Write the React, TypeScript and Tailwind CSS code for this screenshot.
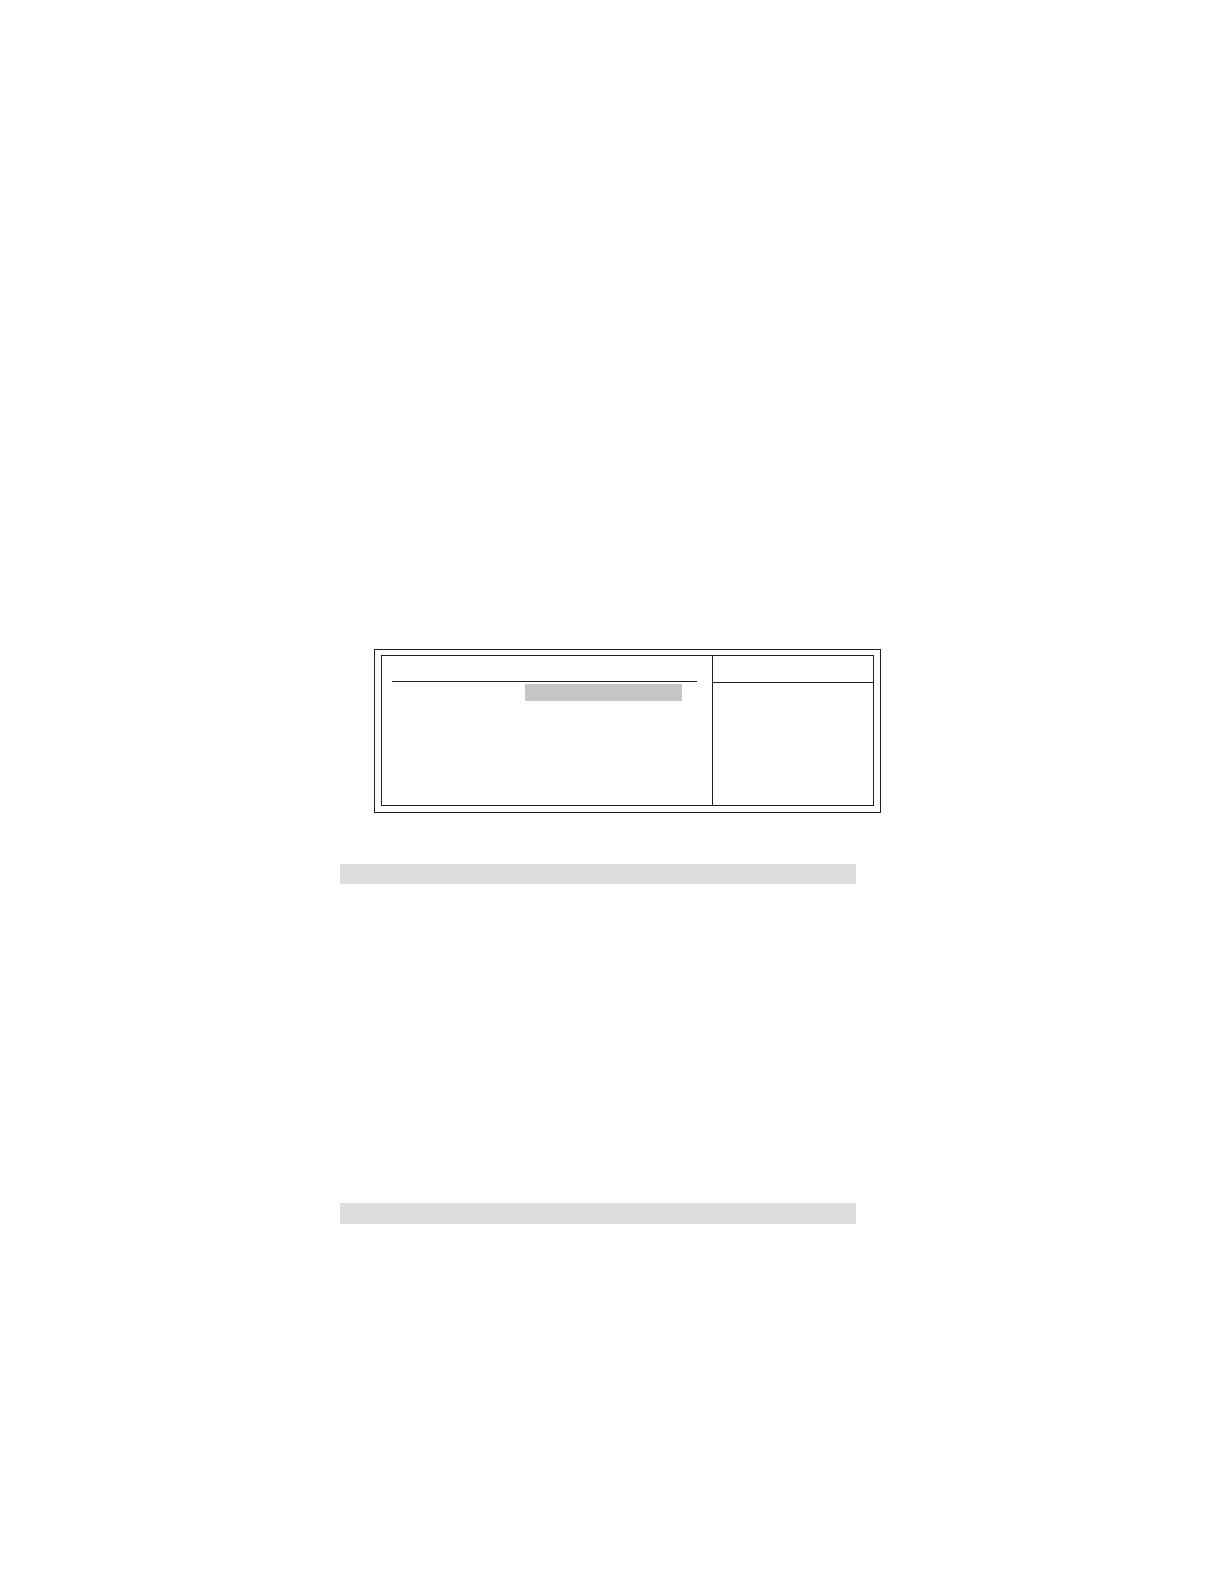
import { FC } from "react";

const SetupPanel: FC = () => {
  return (
    <section className="ml-[34px] mr-[3px] border border-[#231f20] px-[6px] pt-[5px] pb-[6px]">
      <div className="grid min-h-[151px] grid-cols-[330fr_161fr] border border-[#231f20]">
        <div className="flex flex-col gap-[2px] pl-[10px] pr-[15px]">
          <header className="h-[26px] border-b border-[#231f20]" />

          {/* Selected value field */}
          <div className="mr-[15px] h-[17px] w-[157px] self-end bg-[#c6c6c7]" />
        </div>

        <aside className="border-l border-[#231f20]">
          <header className="h-[27px] border-b border-[#231f20]" />
        </aside>
      </div>
    </section>
  );
};

const App: FC = () => {
  return (
    <div className="min-h-screen bg-white pt-[649px]">
      <main className="mx-auto flex w-full max-w-[544px] flex-col">
        <SetupPanel />

        {/* Section heading bands */}
        <div className="mt-[51px] mr-[28px] h-5 bg-[#dcdddd]" />
        <div className="mt-[319px] mr-[28px] h-[21px] bg-[#dcdddd]" />
      </main>
    </div>
  );
};

export default App;
